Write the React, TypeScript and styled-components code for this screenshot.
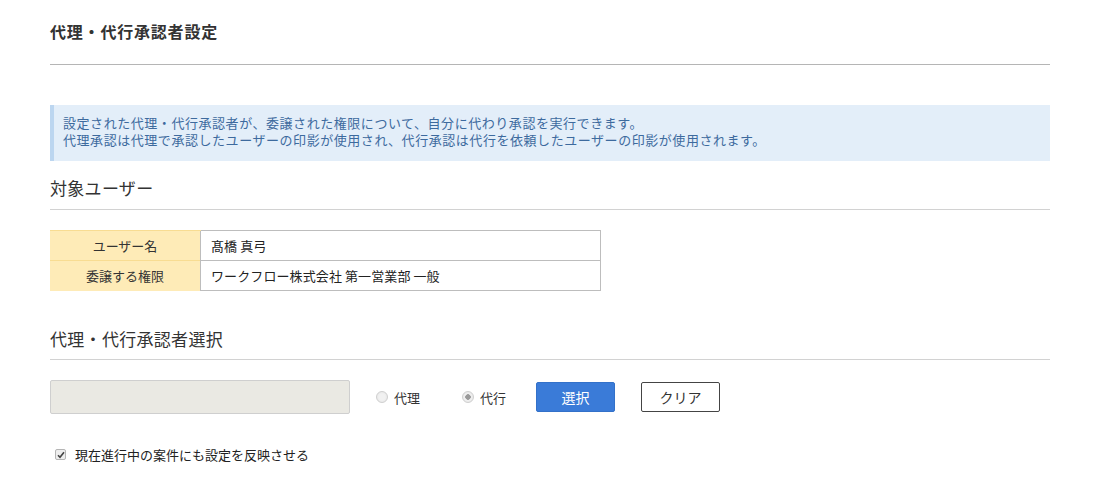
import React from "react";
import styled, { createGlobalStyle } from "styled-components";

const GlobalStyle = createGlobalStyle`
  html, body {
    margin: 0;
    padding: 0;
    background: #fff;
    font-family: "Noto Sans CJK JP", "Liberation Sans", sans-serif;
    color: #333;
  }
`;

const Page = styled.div`
  width: 1000px;
  padding: 0 54px 0 50px;
`;

const PageTitle = styled.h1`
  margin: 0;
  padding-top: 19px;
  height: 45px;
  font-size: 16px;
  letter-spacing: 0.8px;
  font-weight: bold;
  line-height: 24px;
  color: #333;
  border-bottom: 1px solid #b5b5b5;
`;

const InfoBox = styled.div`
  margin-top: 40px;
  background: #e3eef9;
  border-left: 4px solid #bcd6f0;
  padding: 9px 9px 13px;
  font-size: 13px;
  letter-spacing: 0.55px;
  line-height: 17px;
  color: #3d6a9e;
`;

const SectionTitle = styled.h2<{ $top: number; $bottom: number }>`
  margin: 0;
  font-size: 17px;
  letter-spacing: 0.3px;
  font-weight: normal;
  color: #333;
  line-height: 24px;
  padding-bottom: ${(p) => p.$bottom}px;
  border-bottom: 1px solid #d2d2d2;
  margin-top: ${(p) => p.$top}px;
`;

const InfoTable = styled.table`
  margin-top: 20px;
  border-collapse: collapse;
  width: 551px;
  font-size: 13px;
`;

const HeadCell = styled.th`
  width: 150px;
  height: 29px;
  padding: 0;
  background: #feebb7;
  border-top: 1px solid #f8dc92;
  font-weight: normal;
  text-align: center;
  color: #333;
`;

const DataCell = styled.td`
  height: 29px;
  padding: 0 10px;
  border: 1px solid #bdbdbd;
  color: #222;
  letter-spacing: 0.1px;
`;

const SelectRow = styled.div`
  display: flex;
  align-items: center;
  margin-top: 20px;
  height: 34px;
`;

const NameBox = styled.div`
  width: 298px;
  height: 32px;
  background: #eae9e3;
  border: 1px solid #cfcfcf;
  border-radius: 2px;
`;

const RadioLabel = styled.label<{ $left: number }>`
  display: flex;
  align-items: center;
  gap: 6px;
  font-size: 13px;
  color: #333;
  margin-left: ${(p) => p.$left}px;
`;

const RadioDot = styled.span<{ $checked?: boolean }>`
  width: 10px;
  height: 10px;
  border-radius: 50%;
  border: 1px solid #cfcfcf;
  background: radial-gradient(circle, ${(p) => (p.$checked ? "#9a9a9a 0 2.5px," : "")} #f1f1f1 3px, #e2e2e2 100%);
`;

const Button = styled.button<{ $primary?: boolean; $left: number }>`
  width: 79px;
  height: 30px;
  margin-left: ${(p) => p.$left}px;
  font-family: inherit;
  font-size: 14px;
  border-radius: 2px;
  cursor: pointer;
  color: ${(p) => (p.$primary ? "#fff" : "#333")};
  background: ${(p) => (p.$primary ? "#3a7bd8" : "#fff")};
  border: 1px solid ${(p) => (p.$primary ? "#3371c9" : "#444")};
`;

const CheckRow = styled.label`
  display: flex;
  align-items: center;
  gap: 9px;
  margin-top: 31px;
  padding-left: 5px;
  font-size: 13px;
  color: #222;
`;

const CheckBox = styled.span`
  width: 9px;
  height: 9px;
  border: 1px solid #b5b5b5;
  border-radius: 2px;
  background: #eee;
  display: flex;
  align-items: center;
  justify-content: center;
`;

export default function App() {
  return (
    <>
      <GlobalStyle />
      <Page>
        <PageTitle>代理・代行承認者設定</PageTitle>
        <InfoBox>
          設定された代理・代行承認者が、委譲された権限について、自分に代わり承認を実行できます。
          <br />
          代理承認は代理で承認したユーザーの印影が使用され、代行承認は代行を依頼したユーザーの印影が使用されます。
        </InfoBox>

        <SectionTitle $top={15} $bottom={9}>
          対象ユーザー
        </SectionTitle>
        <InfoTable>
          <tbody>
            <tr>
              <HeadCell>ユーザー名</HeadCell>
              <DataCell>髙橋 真弓</DataCell>
            </tr>
            <tr>
              <HeadCell>委譲する権限</HeadCell>
              <DataCell>ワークフロー株式会社 第一営業部 一般</DataCell>
            </tr>
          </tbody>
        </InfoTable>

        <SectionTitle $top={36} $bottom={8}>
          代理・代行承認者選択
        </SectionTitle>
        <SelectRow>
          <NameBox />
          <RadioLabel $left={26}>
            <RadioDot />
            代理
          </RadioLabel>
          <RadioLabel $left={42}>
            <RadioDot $checked />
            代行
          </RadioLabel>
          <Button $primary $left={30}>
            選択
          </Button>
          <Button $left={26}>クリア</Button>
        </SelectRow>
        <CheckRow>
          <CheckBox>
            <svg width="8" height="8" viewBox="0 0 8 8">
              <path d="M1 4.2 L3 6.3 L7 1.2" fill="none" stroke="#444" strokeWidth="1.6" />
            </svg>
          </CheckBox>
          現在進行中の案件にも設定を反映させる
        </CheckRow>
      </Page>
    </>
  );
}
